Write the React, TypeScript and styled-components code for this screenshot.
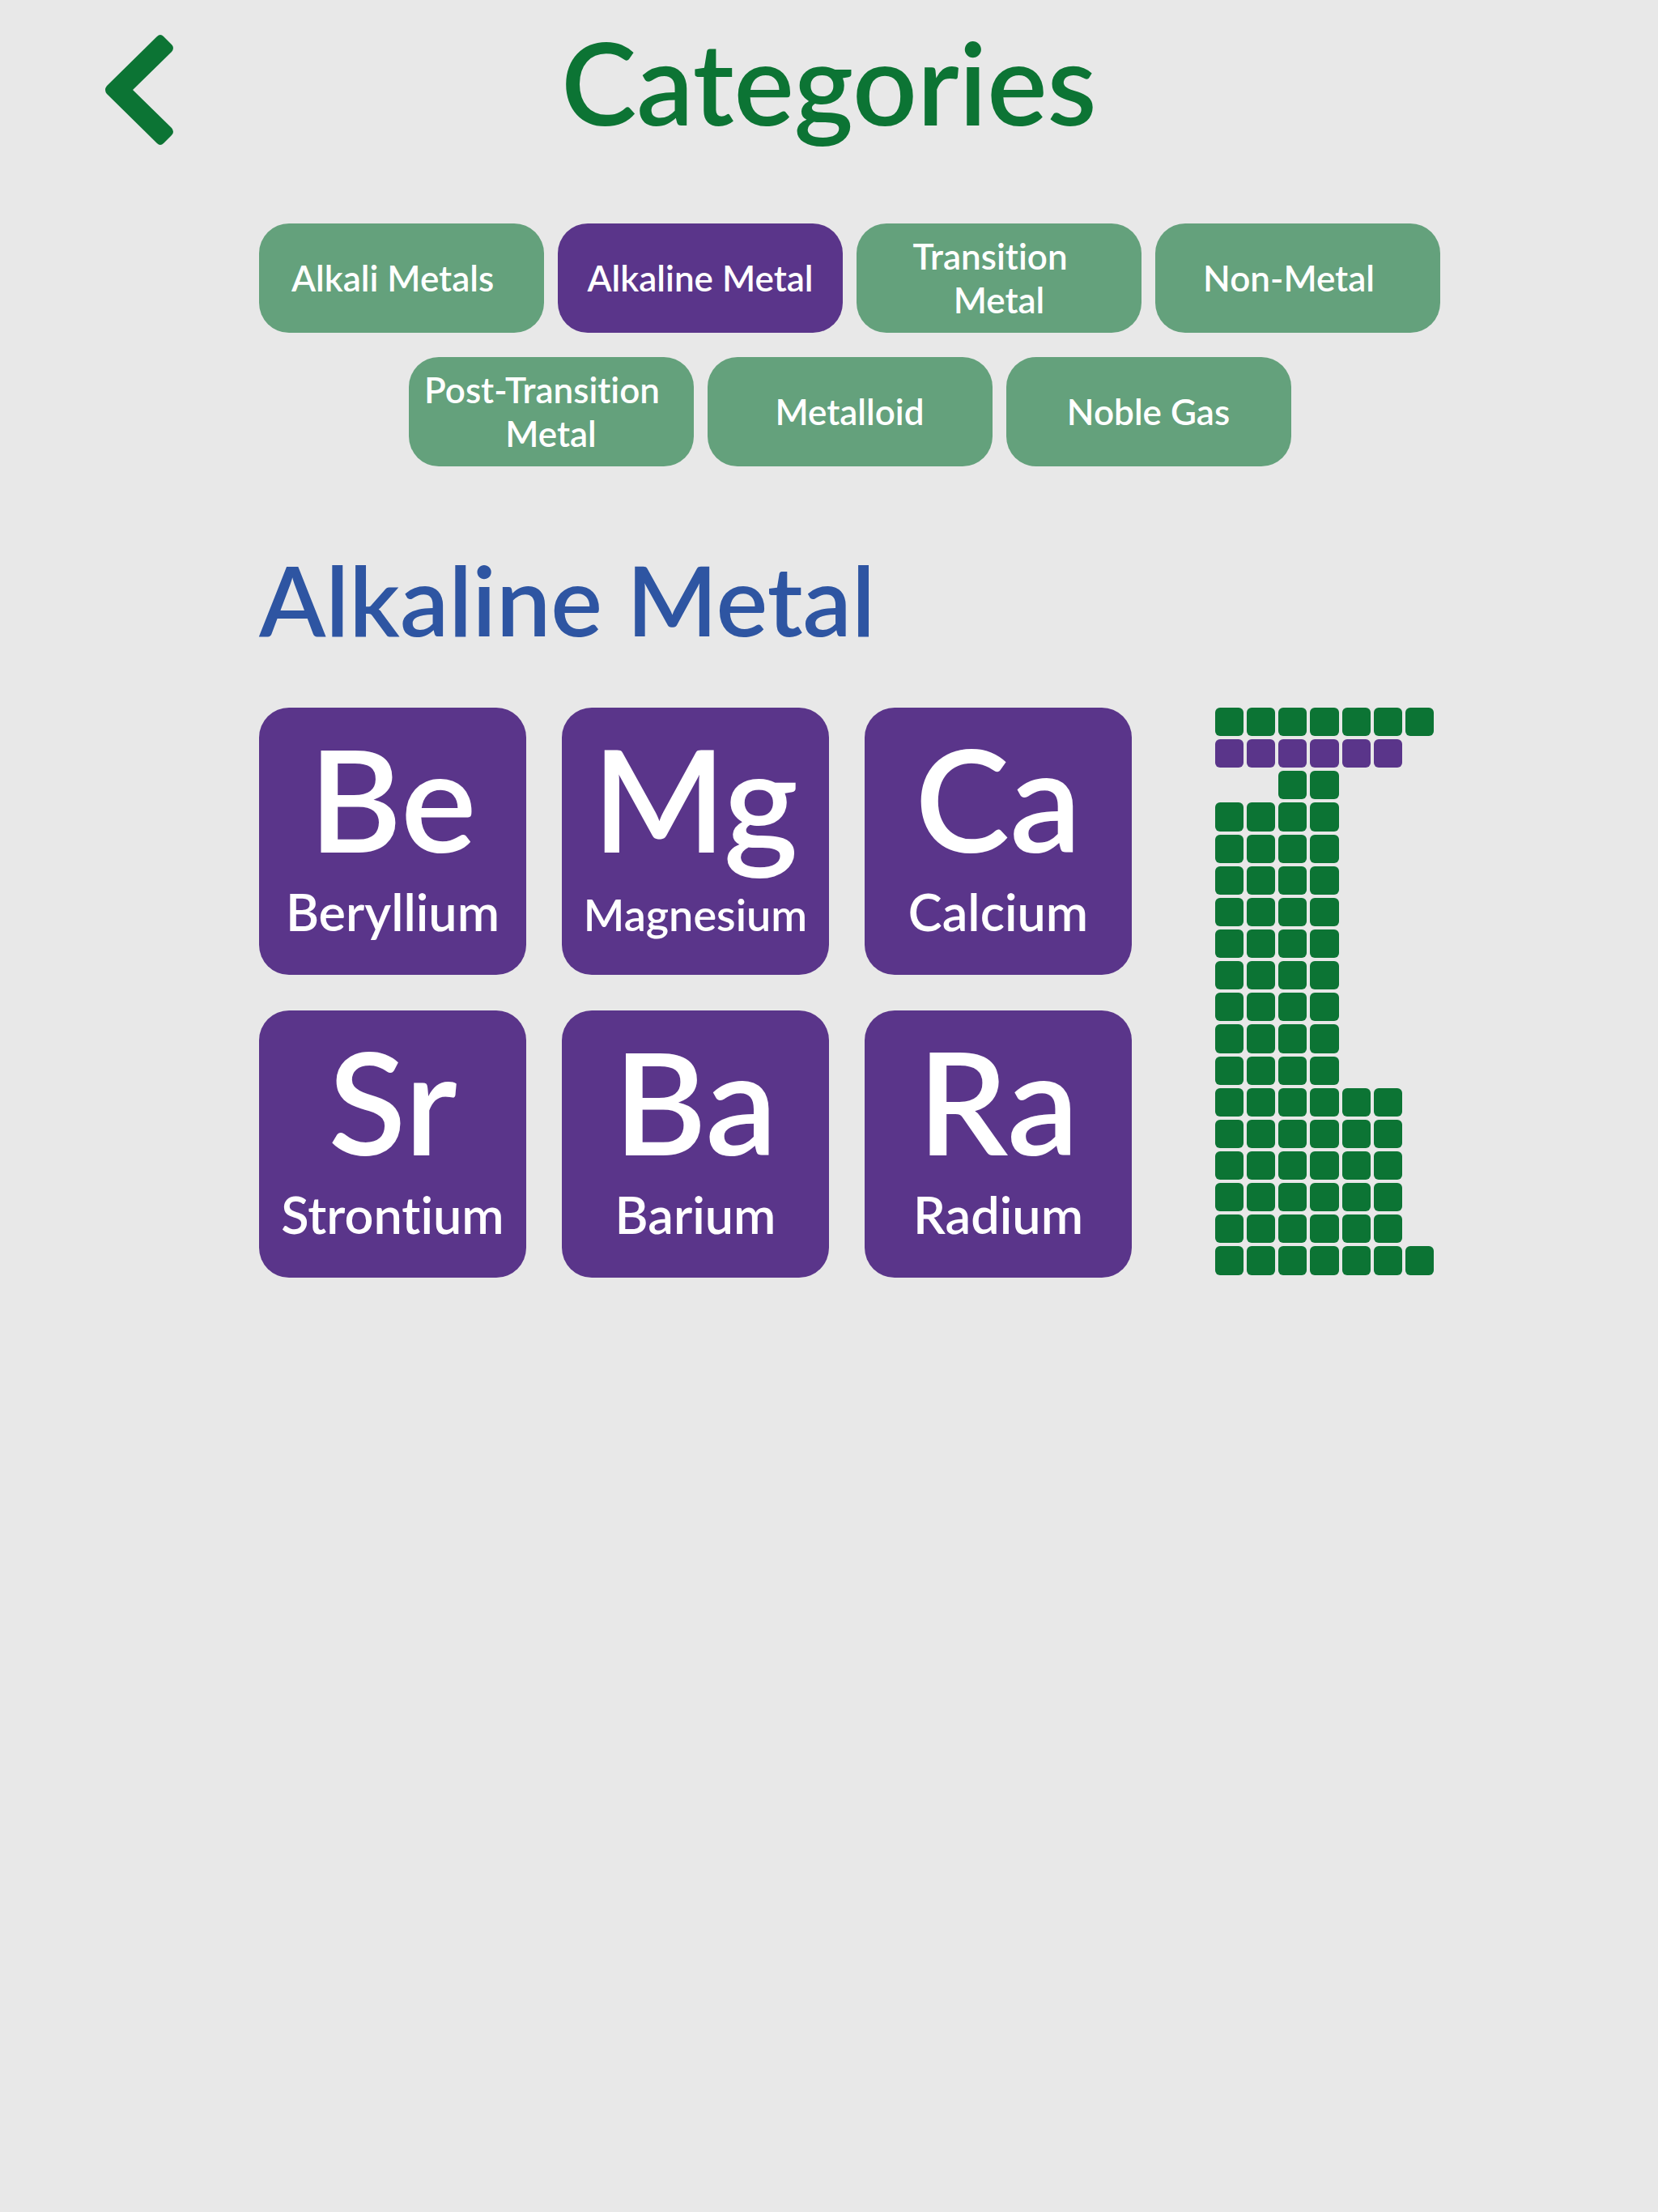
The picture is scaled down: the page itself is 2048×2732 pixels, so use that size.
import React, { useState } from "react";
import styled, { createGlobalStyle } from "styled-components";

const colors = {
  page: "#e8e8e8",
  green: "#0c7434",
  softGreen: "#64a17c",
  purple: "#5a358a",
  blue: "#2e55a2",
  white: "#ffffff",
};

const GlobalStyle = createGlobalStyle`
  * { box-sizing: border-box; }
  body {
    margin: 0;
    background: ${colors.page};
    font-family: Lato, "Open Sans", sans-serif;
    font-variant-ligatures: none;
  }
  button {
    margin: 0;
    border: 0;
    font-family: inherit;
    font-variant-ligatures: inherit;
    cursor: pointer;
  }
`;

const Header = styled.header`
  display: grid;
  grid-template-columns: 84px 1fr 84px;
  align-items: start;
  padding: 33px 130px 0;
`;

const BackButton = styled.button`
  padding: 10px 0 0;
  background: none;
  color: ${colors.green};
  line-height: 0;
`;

const Title = styled.h1`
  margin: 0;
  color: ${colors.green};
  font-size: 140px;
  font-weight: 600;
  line-height: 136px;
  text-align: center;
`;

const Content = styled.main`
  padding: 97px 269px 80px 320px;
`;

const CategoryNav = styled.nav`
  display: flex;
  flex-wrap: wrap;
  justify-content: center;
  gap: 30px 17px;
`;

const CategoryButton = styled.button<{ $active: boolean }>`
  flex: 0 0 calc((100% - 51px) / 4);
  height: 135px;
  padding: 0 0 2px;
  border-radius: 37px;
  background: ${(p) => (p.$active ? colors.purple : colors.softGreen)};
  color: ${colors.white};
  font-size: 44px;
  font-weight: 600;
  line-height: 54px;
  text-align: center;
  white-space: pre;
`;

const SectionTitle = styled.h2`
  margin: 92px 0 62px;
  color: ${colors.blue};
  font-size: 120px;
  font-weight: 600;
  line-height: 144px;
`;

const Panel = styled.section`
  display: grid;
  grid-template-columns: minmax(0, 1fr) 270px;
  align-items: start;
  gap: 103px;
  padding-right: 8px;
`;

const Cards = styled.div`
  display: grid;
  grid-template-columns: repeat(3, minmax(0, 1fr));
  gap: 44px;
`;

const Card = styled.button`
  display: flex;
  flex-direction: column;
  align-items: center;
  gap: 17px;
  aspect-ratio: 1;
  padding: 23px 0 0;
  border-radius: 37px;
  background: ${colors.purple};
  color: ${colors.white};
  font-weight: 600;
`;

const Symbol = styled.span`
  font-size: 176px;
  line-height: 176px;
`;

const Name = styled.span<{ $compact?: boolean }>`
  font-size: ${(p) => (p.$compact ? 54 : 63)}px;
  line-height: ${(p) => (p.$compact ? 80 : 72)}px;
`;

const TableMap = styled.div`
  display: grid;
  grid-template-columns: repeat(7, minmax(0, 1fr));
  gap: 4px;
`;

const Cell = styled.span<{ $kind: string }>`
  aspect-ratio: 1;
  border-radius: 6px;
  background: ${(p) =>
    p.$kind === "p" ? colors.purple : p.$kind === "g" ? colors.green : "transparent"};
`;

// Trailing spaces are part of some labels and shift their centring.
const categories = [
  "Alkali Metals  ",
  "Alkaline Metal",
  "Transition  \nMetal",
  "Non-Metal  ",
  "Post-Transition  \nMetal",
  "Metalloid",
  "Noble Gas",
];

const elements = [
  { symbol: "Be", name: "Beryllium" },
  { symbol: "Mg", name: "Magnesium", compact: true },
  { symbol: "Ca", name: "Calcium" },
  { symbol: "Sr", name: "Strontium" },
  { symbol: "Ba", name: "Barium" },
  { symbol: "Ra", name: "Radium" },
];

// The periodic table turned on its side: one row per group.
const groups = [
  "ggggggg",
  "pppppp.",
  "..gg...",
  ...Array(9).fill("gggg..."),
  ...Array(5).fill("gggggg."),
  "ggggggg",
];

export default function App() {
  const [active, setActive] = useState(1);
  return (
    <>
      <GlobalStyle />
      <Header>
        <BackButton type="button" aria-label="Back">
          <svg width="84" height="136" viewBox="0 0 84 136" fill="currentColor" aria-hidden="true">
            <path d="M64 2Q68 -2 72 2L82 12Q86 16 82 21L34 68L82 115Q86 120 82 124L72 134Q68 138 64 134L2 73Q-2 68 2 63Z" />
          </svg>
        </BackButton>
        <Title>Categories</Title>
      </Header>
      <Content>
        <CategoryNav aria-label="Element categories">
          {categories.map((label, i) => (
            <CategoryButton
              key={label}
              type="button"
              $active={i === active}
              aria-pressed={i === active}
              onClick={() => setActive(i)}
            >
              {label}
            </CategoryButton>
          ))}
        </CategoryNav>
        <SectionTitle>{categories[active].trim()}</SectionTitle>
        <Panel>
          <Cards>
            {elements.map((el) => (
              <Card key={el.symbol} type="button">
                <Symbol>{el.symbol}</Symbol>
                <Name $compact={el.compact}>{el.name}</Name>
              </Card>
            ))}
          </Cards>
          <TableMap role="img" aria-label="Position in the periodic table">
            {groups.flatMap((row: string, r) =>
              row.split("").map((kind, c) => <Cell key={`${r}-${c}`} $kind={kind} />)
            )}
          </TableMap>
        </Panel>
      </Content>
    </>
  );
}
